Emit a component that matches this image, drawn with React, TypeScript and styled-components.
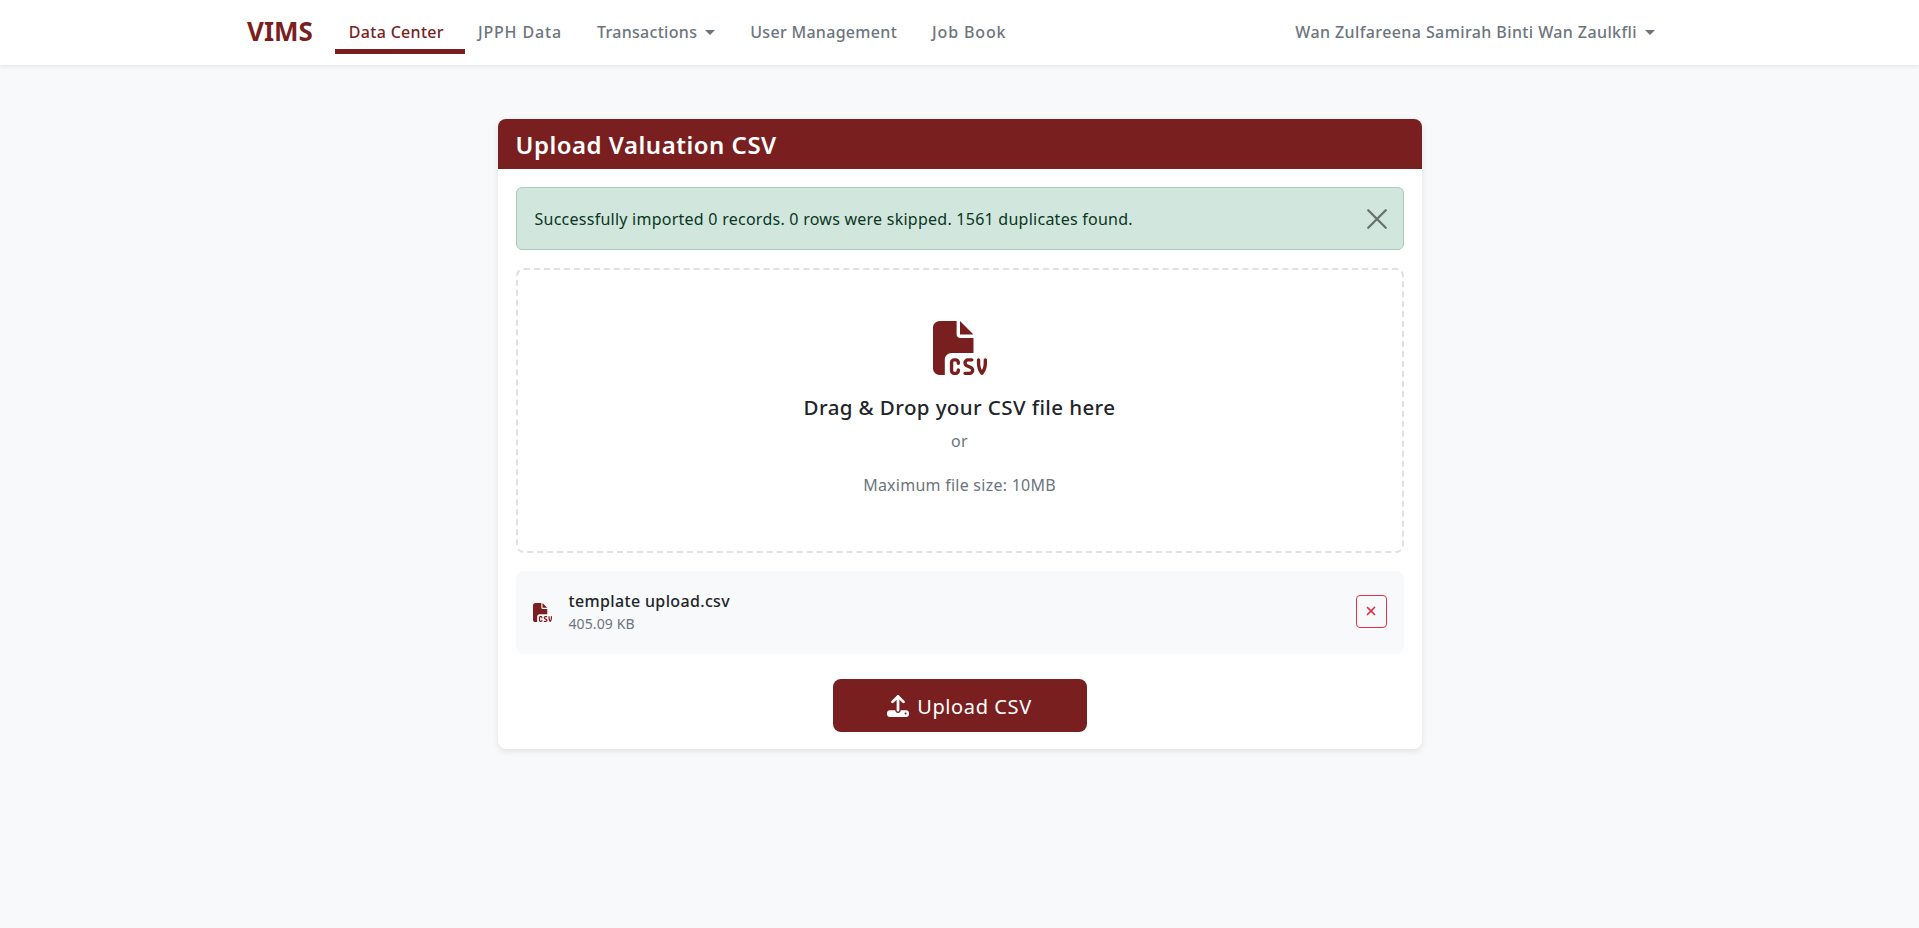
import styled, { createGlobalStyle } from "styled-components";
import { FaFileCsv, FaUpload, FaXmark } from "react-icons/fa6";

const Global=createGlobalStyle`
    html,body{
        margin:0;
        padding:0;
        background:#f8f9fa;
        font-family:"Noto Sans","Open Sans",sans-serif;
        color:#212529;
        letter-spacing:.25px;
    }
`
const Page=styled.div`
    height:928px;
    overflow:hidden;
    display:flex;
    flex-direction:column;
    align-items:center;
`
const Navbar=styled.nav`
    width:100%;
    height:65px;
    flex:none;
    box-sizing:border-box;
    background:#fff;
    box-shadow:0 2px 4px rgba(0,0,0,.08);
    display:flex;
    align-items:center;
    justify-content:space-between;
    padding:0 264px 0 247px;
`
const NavLeft=styled.div`
    display:flex;
    align-items:center;
    height:100%;
`
const Brand=styled.div`
    font-size:26px;
    font-weight:700;
    color:#7a1f1f;
    margin-right:22px;
    letter-spacing:0;
    padding-bottom:3px;
`
const NavLink=styled.a<{$active?:boolean,$wide?:boolean}>`
    height:100%;
    display:flex;
    align-items:center;
    box-sizing:border-box;
    padding:0 14px 1px;
    margin-right:${p=>p.$active?'6px':'7px'};
    font-size:16px;
    font-weight:500;
    letter-spacing:${p=>p.$wide?'.85px':'.3px'};
    color:${p=>p.$active?'#7a1f1f':'#6c757d'};
    position:relative;
    &::after{
        content:${p=>p.$active?'""':'none'};
        position:absolute;
        left:0;
        right:-7px;
        bottom:11px;
        height:5px;
        background:#7a1f1f;
    }
`
const Caret=styled.span`
    display:inline-block;
    margin-left:8px;
    border-top:5px solid #6c757d;
    border-left:5px solid transparent;
    border-right:5px solid transparent;
`
const UserMenu=styled.a`
    font-size:16px;
    font-weight:500;
    letter-spacing:.4px;
    color:#6c757d;
    display:flex;
    align-items:center;
    padding-bottom:1px;
`
const Card=styled.section`
    width:924px;
    margin-top:54px;
    background:#fff;
    border-radius:8px;
    box-shadow:0 2px 6px rgba(0,0,0,.1);
    overflow:hidden;
`
const CardHeader=styled.h1`
    margin:0;
    height:50px;
    display:flex;
    align-items:center;
    padding:0 18px;
    background:#7a1f1f;
    color:#fff;
    font-size:24px;
    font-weight:600;
    letter-spacing:.5px;
`
const CardBody=styled.div`
    padding:18px 18px 17px;
    display:flex;
    flex-direction:column;
`
const Alert=styled.div`
    height:63px;
    box-sizing:border-box;
    display:flex;
    align-items:center;
    justify-content:space-between;
    padding:0 14px 0 18px;
    background:#d1e7dd;
    border:1px solid #a3cfbb;
    border-radius:6px;
    color:#0a3622;
    font-size:16px;
`
const CloseButton=styled.button`
    width:24px;
    height:24px;
    padding:0;
    border:0;
    background:none;
    display:flex;
    align-items:center;
    justify-content:center;
    color:#000;
    opacity:.5;
`
const DropZone=styled.div`
    margin-top:18px;
    height:285px;
    box-sizing:border-box;
    border:2px dashed #dee2e6;
    border-radius:8px;
    display:flex;
    flex-direction:column;
    align-items:center;
    padding-top:51px;
`
const DropIcon=styled(FaFileCsv)`
    font-size:54px;
    color:#7a1f1f;
`
const DropTitle=styled.h2`
    margin:17px 0 0;
    font-size:20.5px;
    line-height:30px;
    font-weight:500;
    letter-spacing:.4px;
`
const Muted=styled.p`
    margin:0;
    font-size:16px;
    line-height:24px;
    color:#6c757d;
`
const OrText=styled(Muted)`
    margin-top:7px;
`
const SizeText=styled(Muted)`
    margin-top:20px;
`
const FileRow=styled.div`
    margin-top:18px;
    height:82.5px;
    box-sizing:border-box;
    display:flex;
    align-items:center;
    padding:0 17px 0 17px;
    background:#f8f9fa;
    border-radius:8px;
`
const FileIcon=styled(FaFileCsv)`
    font-size:19px;
    color:#7a1f1f;
    margin-right:17px;
`
const FileInfo=styled.div`
    flex:1;
    padding-bottom:1px;
`
const FileName=styled.div`
    font-size:16px;
    line-height:24px;
    font-weight:500;
    letter-spacing:.35px;
`
const FileSize=styled.div`
    font-size:14px;
    line-height:21px;
    color:#6c757d;
    letter-spacing:.1px;
`
const RemoveButton=styled.button`
    width:31px;
    height:33px;
    padding:0;
    margin-bottom:2px;
    display:flex;
    align-items:center;
    justify-content:center;
    background:none;
    border:1px solid #dc3545;
    border-radius:4px;
    color:#dc3545;
    font-size:14px;
`
const UploadButton=styled.button`
    align-self:center;
    margin-top:25.5px;
    width:254px;
    height:53px;
    padding:1px 0 0;
    display:flex;
    align-items:center;
    justify-content:center;
    gap:8px;
    border:0;
    border-radius:8px;
    background:#7a1f1f;
    color:#fff;
    font-family:inherit;
    font-size:20px;
    letter-spacing:.6px;
    svg{
        font-size:22px;
    }
`

export default function App(){
    return <Page>
        <Global/>
        <Navbar>
            <NavLeft>
                <Brand>VIMS</Brand>
                <NavLink $active>Data Center</NavLink>
                <NavLink $wide>JPPH Data</NavLink>
                <NavLink>Transactions<Caret/></NavLink>
                <NavLink>User Management</NavLink>
                <NavLink $wide>Job Book</NavLink>
            </NavLeft>
            <UserMenu>Wan Zulfareena Samirah Binti Wan Zaulkfli<Caret/></UserMenu>
        </Navbar>
        <Card>
            <CardHeader>Upload Valuation CSV</CardHeader>
            <CardBody>
                <Alert>
                    Successfully imported 0 records. 0 rows were skipped. 1561 duplicates found.
                    <CloseButton aria-label="Close">
                        <svg width="20" height="20" viewBox="0 0 16 16" fill="none" stroke="currentColor" strokeWidth="1.8" strokeLinecap="round"><path d="M1 1l14 14M15 1L1 15"/></svg>
                    </CloseButton>
                </Alert>
                <DropZone>
                    <DropIcon/>
                    <DropTitle>Drag &amp; Drop your CSV file here</DropTitle>
                    <OrText>or</OrText>
                    <SizeText>Maximum file size: 10MB</SizeText>
                </DropZone>
                <FileRow>
                    <FileIcon/>
                    <FileInfo>
                        <FileName>template upload.csv</FileName>
                        <FileSize>405.09 KB</FileSize>
                    </FileInfo>
                    <RemoveButton aria-label="Remove"><FaXmark/></RemoveButton>
                </FileRow>
                <UploadButton><FaUpload/>Upload CSV</UploadButton>
            </CardBody>
        </Card>
    </Page>
}
